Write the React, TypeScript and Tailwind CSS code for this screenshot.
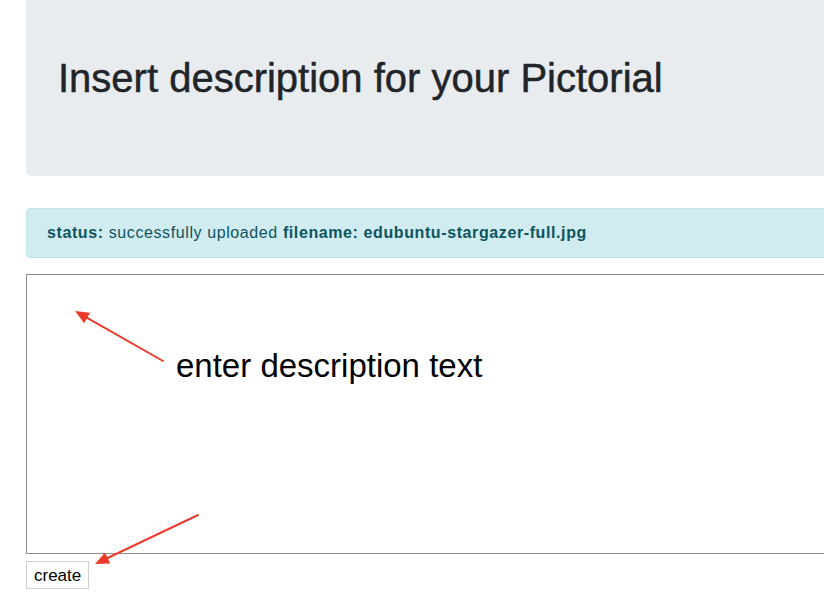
import React from 'react';

const Arrow: React.FC<{ x1: number; y1: number; x2: number; y2: number }> = ({ x1, y1, x2, y2 }) => {
    const a = Math.atan2(y2 - y1, x2 - x1);
    const len = 14;
    const w = 6;
    const bx = x2 - Math.cos(a) * len;
    const by = y2 - Math.sin(a) * len;
    const p1 = `${bx + Math.sin(a) * w},${by - Math.cos(a) * w}`;
    const p2 = `${bx - Math.sin(a) * w},${by + Math.cos(a) * w}`;
    return (
        <g>
            <line x1={x1} y1={y1} x2={bx} y2={by} stroke="#ec3b2c" strokeWidth={2} strokeLinecap="round" />
            <polygon points={`${x2},${y2} ${p1} ${p2}`} fill="#ec3b2c" />
        </g>
    );
};

export default function App() {
    return (
        <div className="h-screen w-full overflow-hidden bg-white">
            <div className="relative w-[1100px] pl-[26px] font-['Liberation_Sans',Arial,sans-serif]">

                {/* Jumbotron */}
                <div className="mb-8 rounded-b-[5px] bg-[#e9ecef] px-8 pt-[54px] pb-[74px]">
                    <h1 className="text-[40px] leading-[48px] font-medium text-[#212529] [-webkit-text-stroke:0.5px_#212529]">
                        Insert description for your Pictorial
                    </h1>
                </div>

                {/* Status alert */}
                <div className="mb-4 rounded border border-[#bee5eb] bg-[#d1ecf1] px-5 py-3 text-[16px] leading-6 tracking-[0.6px] text-[#0c5460]">
                    <b>status:</b> successfully uploaded <b>filename: edubuntu-stargazer-full.jpg</b>
                </div>

                {/* Form */}
                <textarea className="block h-[280px] w-full resize-none border border-[#8d8d8d] bg-white outline-none" />
                <button className="mt-[7px] h-[28px] border border-[#cfcfcf] bg-white px-[7px] text-[17px] leading-none text-black">
                    create
                </button>

                {/* Annotations */}
                <div className="absolute top-[349px] left-[176px] text-[33px] leading-[33px] text-black">
                    enter description text
                </div>
                <svg className="pointer-events-none absolute top-0 left-0" width="824" height="599">
                    <Arrow x1={163} y1={361} x2={75} y2={311} />
                    <Arrow x1={198} y1={515} x2={95} y2={564} />
                </svg>
            </div>
        </div>
    );
}
